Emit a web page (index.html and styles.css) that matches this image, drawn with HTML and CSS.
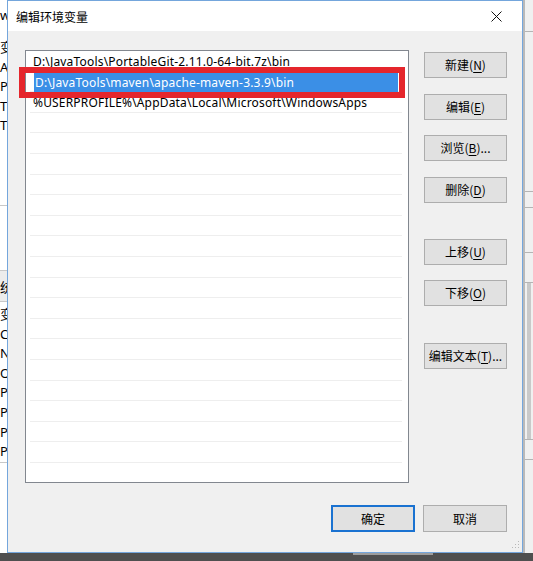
FILE: index.html
```html
<!DOCTYPE html>
<html lang="zh-CN">
<head>
<meta charset="utf-8">
<title>编辑环境变量</title>
<link rel="stylesheet" href="styles.css">
</head>
<body>
<div class="desktop">
  <div class="bgwin">
    <div class="bg-left">
      <div class="bg-top">w</div>
      <div class="bg-list1">
        <div class="bg-row">变</div>
        <div class="bg-row">A</div>
        <div class="bg-row">Pa</div>
        <div class="bg-row">TE</div>
        <div class="bg-row">TN</div>
      </div>
      <div class="bg-list2">
        <div class="bg-head">统</div>
        <div class="bg-row">变</div>
        <div class="bg-row">Co</div>
        <div class="bg-row">N</div>
        <div class="bg-row">O</div>
        <div class="bg-row">Pa</div>
        <div class="bg-row">PA</div>
        <div class="bg-row">PF</div>
        <div class="bg-row">PF</div>
      </div>
    </div>
    <div class="bg-right">
      <div class="br-seg br-a"></div>
      <div class="br-seg br-b"></div>
      <div class="br-seg br-c"></div>
      <div class="br-seg br-d"></div>
      <div class="br-seg br-e"></div>
      <div class="br-seg br-f"></div>
      <div class="br-seg br-g"></div>
    </div>
  </div>
  <div class="taskbar"><div class="tb-light"></div></div>

  <div class="dialog">
    <div class="titlebar">
      <span class="title">编辑环境变量</span>
      <svg class="close" width="11" height="11" viewBox="0 0 11 11"><path d="M0.5 0.5 L10.5 10.5 M10.5 0.5 L0.5 10.5" stroke="#111" stroke-width="1" fill="none"/></svg>
    </div>
    <div class="dbody">
      <div class="main">
        <div class="list">
          <div class="row">D:\JavaTools\PortableGit-2.11.0-64-bit.7z\bin</div>
          <div class="row"><div class="sel">D:\JavaTools\maven\apache-maven-3.3.9\bin</div></div>
          <div class="row">%USERPROFILE%\AppData\Local\Microsoft\WindowsApps</div>
          <div class="row"></div><div class="row"></div><div class="row"></div><div class="row"></div>
          <div class="row"></div><div class="row"></div><div class="row"></div><div class="row"></div>
          <div class="row"></div><div class="row"></div><div class="row"></div><div class="row"></div>
          <div class="row"></div><div class="row"></div><div class="row"></div><div class="row"></div>
          <div class="row"></div><div class="row last"></div>
        </div>
        <div class="side">
          <button class="btn">新建(<u>N</u>)</button>
          <button class="btn">编辑(<u>E</u>)</button>
          <button class="btn">浏览(<u>B</u>)...</button>
          <button class="btn">删除(<u>D</u>)</button>
          <button class="btn far">上移(<u>U</u>)</button>
          <button class="btn">下移(<u>O</u>)</button>
          <button class="btn far2">编辑文本(<u>T</u>)...</button>
        </div>
      </div>
      <div class="footer">
        <button class="btn fbtn default">确定</button>
        <button class="btn fbtn">取消</button>
      </div>
    </div>
    <svg class="grip" width="8" height="8" viewBox="0 0 8 8">
      <rect x="6" y="0" width="1" height="1" fill="#b8b8b8"/>
      <rect x="3" y="3" width="1" height="1" fill="#b8b8b8"/>
      <rect x="6" y="3" width="1" height="1" fill="#b8b8b8"/>
      <rect x="0" y="6" width="1" height="1" fill="#b8b8b8"/>
      <rect x="3" y="6" width="1" height="1" fill="#b8b8b8"/>
      <rect x="6" y="6" width="1" height="1" fill="#b8b8b8"/>
    </svg>
  </div>

  <div class="mark"></div>
</div>
</body>
</html>
```

FILE: styles.css
```css
* { box-sizing: border-box; }
html, body { margin: 0; padding: 0; }
body {
  width: 533px;
  height: 561px;
  overflow: hidden;
  background: #f0f0f0;
  font-family: "Noto Sans", "Noto Sans CJK SC", sans-serif;
  font-size: 12px;
  color: #000;
}
.desktop { position: relative; width: 533px; height: 561px; }

/* background window */
.bgwin { display: flex; justify-content: space-between; height: 553px; }
.bg-left { width: 60px; background: #fff; border-right: 1px solid #ccc; font-size: 13px; }
.bg-top { height: 38px; line-height: 30px; padding-left: 0; background: #fff; }
.bg-list1 { height: 168px; border-bottom: 1px solid #c8c8c8; }
.bg-list2 { margin-top: 64px; border-top: 1px solid #c8c8c8; border-bottom: 1px solid #c8c8c8; }
.bg-row { height: 19.6px; line-height: 19.6px; padding-left: 0; white-space: nowrap; }
.bg-head { height: 31px; line-height: 30px; background: #ececec; border-bottom: 1px solid #c8c8c8; padding-top: 1px; }
.bg-head + .bg-row { margin-top: 3px; }
.bg-right { width: 10px; background: #f0f0f0; border-left: 2px solid #b9b9b9; }
.br-seg { border-bottom: 1px solid #b4b4b4; }
.br-a { height: 32px; }
.br-b { height: 160px; }
.br-c { height: 16px; }
.br-d { height: 45px; }
.br-e { height: 30px; }
.br-f { height: 157px; background: linear-gradient(to right, #f0f0f0 2px, #c9c9c9 2px, #c9c9c9 6px, #f0f0f0 6px); }
.br-g { height: 20px; }
.taskbar { height: 8px; background: #4f4f4f; padding-left: 353px; }
.tb-light { width: 80px; height: 2px; background: #9d9d9d; }

/* dialog */
.dialog {
  position: absolute;
  left: 7px;
  top: 0;
  width: 516px;
  height: 553px;
  border: 1px solid #74a6dc;
  background: #f0f0f0;
  display: flex;
  flex-direction: column;
}
.titlebar {
  height: 30px;
  background: #fff;
  display: flex;
  align-items: center;
  justify-content: space-between;
  padding: 0 20px 0 8px;
  flex-shrink: 0;
}
.title { font-family: "Noto Sans CJK SC", sans-serif; font-size: 12px; color: #000; }
.close { display: block; margin-top: 1px; }
.dbody { flex: 1; padding: 19px 15px 20px 17px; display: flex; flex-direction: column; }
.main { display: flex; gap: 15px; height: 433px; }
.list {
  width: 384px;
  height: 433px;
  border: 1px solid #82878f;
  background: #fff;
  overflow: hidden;
}
.row {
  height: 20.6px;
  line-height: 19.6px;
  margin: 0 6px 0 4px;
  padding: 1px 0 0 3px;
  border-bottom: 1px solid #eeeeee;
  white-space: nowrap;
  font-family: "Noto Sans", "Noto Sans CJK SC", sans-serif;
  font-size: 12px;
  letter-spacing: 0.18px;
}
.row.last { border-bottom: none; }
.sel {
  margin: 0 4px 0 1px;
  padding: 1px 0 0 1px;
  height: 19px;
  line-height: 18px;
  background: #3b8fe6;
  color: #fff;
}
.side { width: 83px; display: flex; flex-direction: column; padding-top: 2px; }
.btn {
  height: 26px;
  padding: 0;
  background: #e1e1e1;
  border: 1px solid #adadad;
  font-family: "Noto Sans CJK SC", sans-serif;
  font-size: 12px;
  color: #000;
  text-align: center;
  line-height: 22px;
}
.btn u { text-underline-offset: 2px; }
.side .btn + .btn { margin-top: 15.5px; }
.side .btn.far { margin-top: 36px; }
.side .btn.far2 { margin-top: 36.5px; }
.footer { display: flex; justify-content: flex-end; gap: 8px; margin-top: 22px; }
.fbtn { width: 84px; height: 27px; }
.default { border: 2px solid #1a72d1; }
.grip { position: absolute; right: 2px; bottom: 3px; }

/* annotation */
.mark {
  position: absolute;
  left: 19px;
  top: 67px;
  width: 386px;
  height: 31px;
  border: 6px solid #e5262c;
}
```
